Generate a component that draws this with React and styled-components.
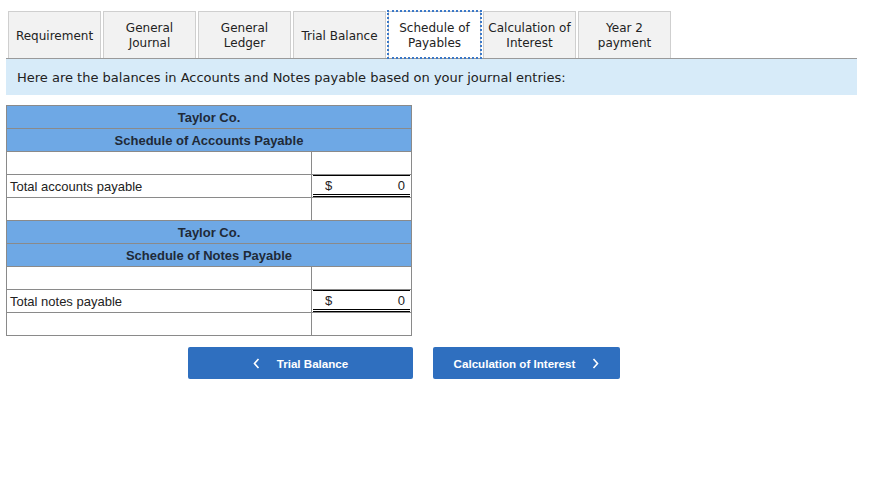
import React from "react";
import styled, { createGlobalStyle } from "styled-components";

const GlobalStyle = createGlobalStyle`
  html, body {
    margin: 0;
    padding: 0;
    background: #ffffff;
  }
`;

const Page = styled.div`
  width: 873px;
  height: 482px;
  padding: 11px 16px 0 6px;
  box-sizing: border-box;
`;

const TabBar = styled.div`
  display: flex;
  gap: 2px;
  padding-left: 2px;
  height: 47px;
`;

const Tab = styled.div`
  width: 93px;
  height: 47px;
  box-sizing: border-box;
  display: flex;
  align-items: center;
  justify-content: center;
  padding-top: 2px;
  text-align: center;
  font-family: "DejaVu Sans", Verdana, sans-serif;
  font-size: 12px;
  line-height: 15px;
  color: #222;
  background: ${(p) => (p.$active ? "#ffffff" : "#f2f2f2")};
  border: 1px solid #cfcfcf;
  border-bottom: none;
  outline: ${(p) => (p.$active ? "2px dotted #3a78c8" : "none")};
  outline-offset: -1px;
  position: relative;
  z-index: ${(p) => (p.$active ? 1 : 0)};
`;

const InfoBar = styled.div`
  border-top: 1px solid #9a9a9a;
  background: #d7ebf9;
  height: 36px;
  display: flex;
  align-items: center;
  padding: 0 0 0 11px;
  font-family: "DejaVu Sans", Verdana, sans-serif;
  font-size: 13px;
  color: #222;
`;

const Schedules = styled.div`
  margin-top: 10px;
  width: 406px;
`;

const Table = styled.table`
  width: 100%;
  table-layout: fixed;
  border-collapse: collapse;
  font-family: "Liberation Sans", Arial, sans-serif;
  font-size: 13px;
  color: #222;
  & + & {
    margin-top: -1px;
  }
`;

const HeadCell = styled.th`
  background: #6ea8e5;
  border: 1px solid #8a8a8a;
  height: 22px;
  padding: 0;
  font-weight: bold;
  font-size: 13px;
  color: #1f2a38;
  text-align: center;
`;

const LabelCell = styled.td`
  border: 1px solid #8a8a8a;
  height: 22px;
  padding: 0 3px;
`;

const AmountCell = styled.td`
  border: 1px solid #8a8a8a;
  height: 22px;
  padding: 0;
`;

const Total = styled.div`
  display: flex;
  justify-content: space-between;
  align-items: center;
  height: 18px;
  margin: 0 1px;
  padding: 0 5px 0 12px;
  border-top: 1px solid #000;
  border-bottom: 3px double #000;
`;

const ButtonRow = styled.div`
  display: flex;
  gap: 20px;
  margin-top: 11px;
  padding-left: 182px;
`;

const NavButton = styled.button`
  height: 32px;
  width: ${(p) => p.$width}px;
  border: none;
  border-radius: 2px;
  background: #2f6fbf;
  color: #ffffff;
  font-family: "Liberation Sans", Arial, sans-serif;
  font-weight: bold;
  font-size: 11.6px;
  display: flex;
  align-items: center;
  justify-content: center;
  gap: 17px;
  padding: 0;
  cursor: pointer;
`;

const Chevron = ({ dir }) => (
  <svg width="7" height="11" viewBox="0 0 7 11" fill="none">
    <path
      d={dir === "left" ? "M5.5 1 L1.5 5.5 L5.5 10" : "M1.5 1 L5.5 5.5 L1.5 10"}
      stroke="#fff"
      strokeWidth="1.6"
    />
  </svg>
);

const tabs = [
  ["Requirement"],
  ["General", "Journal"],
  ["General", "Ledger"],
  ["Trial Balance"],
  ["Schedule of", "Payables"],
  ["Calculation of", "Interest"],
  ["Year 2", "payment"],
];

const Schedule = ({ title, totalLabel }) => (
  <Table>
    <colgroup>
      <col style={{ width: 305 }} />
      <col />
    </colgroup>
    <tbody>
      <tr>
        <HeadCell colSpan={2}>Taylor Co.</HeadCell>
      </tr>
      <tr>
        <HeadCell colSpan={2}>{title}</HeadCell>
      </tr>
      <tr>
        <LabelCell />
        <AmountCell />
      </tr>
      <tr>
        <LabelCell>{totalLabel}</LabelCell>
        <AmountCell>
          <Total>
            <span>$</span>
            <span>0</span>
          </Total>
        </AmountCell>
      </tr>
      <tr>
        <LabelCell />
        <AmountCell />
      </tr>
    </tbody>
  </Table>
);

export default function App() {
  return (
    <>
      <GlobalStyle />
      <Page>
        <TabBar>
          {tabs.map((lines, i) => (
            <Tab key={i} $active={i === 4}>
              <span>
                {lines.map((l, j) => (
                  <React.Fragment key={j}>
                    {j > 0 && <br />}
                    {l}
                  </React.Fragment>
                ))}
              </span>
            </Tab>
          ))}
        </TabBar>
        <InfoBar>
          Here are the balances in Accounts and Notes payable based on your journal entries:
        </InfoBar>
        <Schedules>
          <Schedule title="Schedule of Accounts Payable" totalLabel="Total accounts payable" />
          <Schedule title="Schedule of Notes Payable" totalLabel="Total notes payable" />
        </Schedules>
        <ButtonRow>
          <NavButton $width={225}>
            <Chevron dir="left" />
            <span>Trial Balance</span>
          </NavButton>
          <NavButton $width={187}>
            <span>Calculation of Interest</span>
            <Chevron dir="right" />
          </NavButton>
        </ButtonRow>
      </Page>
    </>
  );
}
